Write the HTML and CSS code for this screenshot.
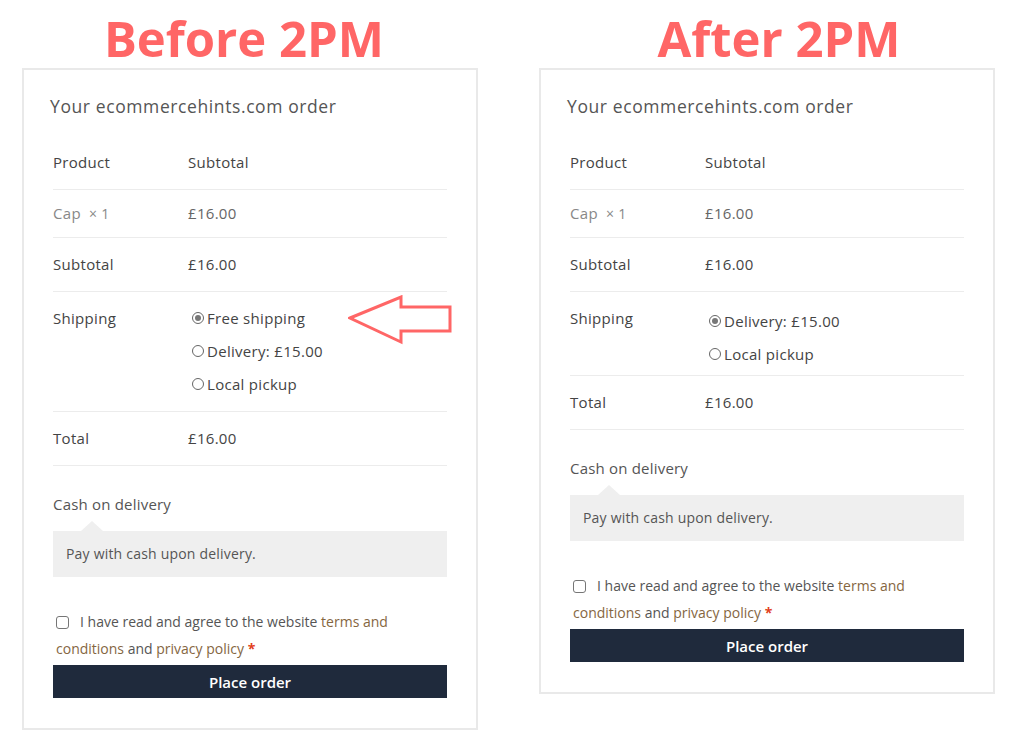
FILE: index.html
```html
<!DOCTYPE html>
<html lang="en">

<head>
    <meta charset="UTF-8">
    <meta name="viewport" content="width=device-width, initial-scale=1.0">
    <title>Before / After 2PM checkout</title>
    <link rel="stylesheet" href="styles.css">
</head>

<body>
    <div class="compare">
        <!-- Before 2PM -->
        <div class="column column-before">
            <h1 class="title">Before 2PM</h1>
            <div class="order-card">
                <h3 class="order-heading">Your ecommercehints.com order</h3>
                <div class="order-row head">
                    <div>Product</div>
                    <div>Subtotal</div>
                </div>
                <div class="order-row item">
                    <div class="item-name">Cap <span class="qty">× 1</span></div>
                    <div>£16.00</div>
                </div>
                <div class="order-row">
                    <div class="label">Subtotal</div>
                    <div>£16.00</div>
                </div>
                <div class="order-row">
                    <div class="label">Shipping</div>
                    <ul class="shipping-list">
                        <li><span class="radio checked"></span>Free shipping</li>
                        <li><span class="radio"></span>Delivery: £15.00</li>
                        <li><span class="radio"></span>Local pickup</li>
                    </ul>
                </div>
                <div class="order-row">
                    <div class="label">Total</div>
                    <div>£16.00</div>
                </div>

                <div class="payment-name">Cash on delivery</div>
                <div class="payment-box">Pay with cash upon delivery.</div>

                <p class="terms">
                    <span class="checkbox"></span>I have read and agree to the website <a href="#">terms and</a><br><a href="#">conditions</a> and <a href="#">privacy policy</a> <span class="required">*</span>
                </p>
                <button class="place-order">Place order</button>

                <!-- arrow annotation -->
                <svg class="arrow" width="110" height="52" viewBox="0 0 110 52">
                    <path d="M2 23 L53 2 L53 12 L102 12 L102 36 L53 36 L53 47 Z" fill="none" stroke="#ff6666" stroke-width="3" stroke-linejoin="miter" />
                </svg>
            </div>
        </div>

        <!-- After 2PM -->
        <div class="column column-after">
            <h1 class="title">After 2PM</h1>
            <div class="order-card">
                <h3 class="order-heading">Your ecommercehints.com order</h3>
                <div class="order-row head">
                    <div>Product</div>
                    <div>Subtotal</div>
                </div>
                <div class="order-row item">
                    <div class="item-name">Cap <span class="qty">× 1</span></div>
                    <div>£16.00</div>
                </div>
                <div class="order-row">
                    <div class="label">Subtotal</div>
                    <div>£16.00</div>
                </div>
                <div class="order-row">
                    <div class="label">Shipping</div>
                    <ul class="shipping-list short">
                        <li><span class="radio checked"></span>Delivery: £15.00</li>
                        <li><span class="radio"></span>Local pickup</li>
                    </ul>
                </div>
                <div class="order-row">
                    <div class="label">Total</div>
                    <div>£16.00</div>
                </div>

                <div class="payment-name">Cash on delivery</div>
                <div class="payment-box">Pay with cash upon delivery.</div>

                <p class="terms">
                    <span class="checkbox"></span>I have read and agree to the website <a href="#">terms and</a><br><a href="#">conditions</a> and <a href="#">privacy policy</a> <span class="required">*</span>
                </p>
                <button class="place-order">Place order</button>
            </div>
        </div>
    </div>
</body>

</html>
```

FILE: styles.css
```css
body {
    margin: 0;
    background: #fff;
    font-family: 'Open Sans', sans-serif;
    color: #555;
}

.compare {
    display: flex;
    align-items: flex-start;
    gap: 61px;
    padding: 8px 0 0 22px;
}

.column {
    width: 456px;
}

.title {
    margin: 0;
    height: 60px;
    font-size: 49px;
    line-height: 60px;
    font-weight: 700;
    color: #ff6666;
    text-align: center;
}

.column-before .title {
    padding-right: 12px;
}

.column-after .title {
    padding-left: 24px;
}

.order-card {
    position: relative;
    border: 2px solid #e9e9e9;
    padding: 24px 29px 30px;
}

.order-heading {
    margin: 0 0 18px -3px;
    font-size: 17.5px;
    line-height: 24px;
    font-weight: 400;
    letter-spacing: 0.6px;
    color: #555;
}

/* table rows */
.order-row {
    display: grid;
    grid-template-columns: 135px 1fr;
    padding: 16px 0 17px;
    border-bottom: 1px solid #ececec;
    font-size: 15px;
    line-height: 20px;
    letter-spacing: 0.3px;
    color: #444;
}

.order-row.item {
    padding: 13px 0;
    color: #666;
}

.item-name {
    color: #888;
}

.qty {
    margin-left: 4px;
    font-size: 14px;
}

.label {
    font-weight: 500;
}

.shipping-list {
    margin: 0;
    padding: 0;
    list-style: none;
}

.shipping-list li {
    display: flex;
    align-items: center;
    margin-bottom: 13px;
}

.shipping-list li:last-child {
    margin-bottom: 0;
}

.shipping-list.short {
    margin: 3px 0 -6px;
}

.radio {
    width: 12px;
    height: 12px;
    margin: 0 3px 0 4px;
    border: 1px solid #666;
    border-radius: 50%;
    box-sizing: border-box;
    position: relative;
}

.radio.checked::after {
    content: '';
    position: absolute;
    left: 2px;
    top: 2px;
    width: 6px;
    height: 6px;
    border-radius: 50%;
    background: #777;
}

/* payment */
.payment-name {
    margin-top: 28px;
    font-size: 15px;
    line-height: 20px;
    letter-spacing: 0.2px;
    color: #555;
}

.payment-box {
    position: relative;
    margin-top: 17px;
    padding: 13px;
    background: #efefef;
    font-size: 14px;
    line-height: 20px;
    letter-spacing: 0.2px;
    color: #555;
}

.payment-box::before {
    content: '';
    position: absolute;
    left: 28px;
    top: -10px;
    border-left: 11px solid transparent;
    border-right: 11px solid transparent;
    border-bottom: 10px solid #efefef;
}

.terms {
    margin: 31px 0 0;
    padding-left: 3px;
    font-size: 14px;
    line-height: 27px;
    color: #555;
}

.terms a {
    color: #85663f;
    text-decoration: none;
}

.checkbox {
    display: inline-block;
    width: 13px;
    height: 13px;
    margin-right: 11px;
    vertical-align: -2px;
    border: 1px solid #767676;
    border-radius: 3px;
    box-sizing: border-box;
}

.required {
    color: #e2401c;
    font-weight: 700;
}

.place-order {
    display: block;
    width: 100%;
    height: 33px;
    margin-top: 3px;
    border: none;
    background: #1f2a3c;
    color: #fff;
    font-family: 'Open Sans', sans-serif;
    font-size: 15px;
    font-weight: 600;
    cursor: pointer;
}

.arrow {
    position: absolute;
    left: 324px;
    top: 225px;
}
```
